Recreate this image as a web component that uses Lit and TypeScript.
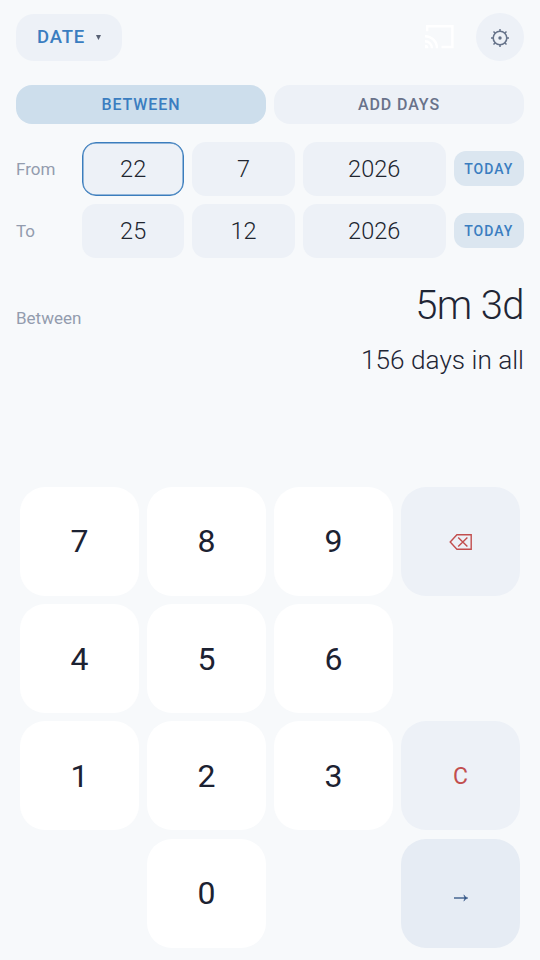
import { LitElement, html, css, TemplateResult } from "lit";
import { customElement, property, state } from "lit/decorators.js";
import { classMap } from "lit/directives/class-map.js";

type Key = { id: string; kind: "digit" | "soft" | "next"; face: string | TemplateResult } | null;

const backspace = html`<svg class="icon" width="24" height="18" viewBox="0 0 24 18" fill="none" stroke="currentColor" stroke-width="1.4">
  <path d="M1.2 9 L7.9 1.7 H22.2 V16.3 H7.9 Z" />
  <path d="M9.2 4.4 L18.4 13.6 M18.4 4.4 L9.2 13.6" />
</svg>`;

const arrow = html`<svg class="icon" width="16" height="10" viewBox="0 0 16 10" fill="none" stroke="currentColor">
  <path d="M1 5 H13" stroke-width="1.3" />
  <path d="M10.8 1.8 Q12 4.2 15 5 Q12 5.8 10.8 8.2 L11.8 5 Z" fill="currentColor" stroke-width="0.4" />
</svg>`;

const cast = html`<svg class="cast" width="34" height="28" viewBox="0 0 34 28" fill="none" stroke="currentColor" stroke-width="2.4">
  <path d="M5.2 8.2 V3.2 H30.4 V24 H19.5" />
  <path d="M3 13.2 A12 12 0 0 1 15 25.2 M3 18.2 A7 7 0 0 1 10 25.2" />
  <path d="M3 21.8 A3.4 3.4 0 0 1 6.4 25.2 H3 Z" fill="currentColor" stroke="none" />
</svg>`;

const gear = html`<svg class="icon" width="20" height="20" viewBox="-10 -10 20 20" fill="none" stroke="currentColor">
  <circle r="6.8" stroke-width="1.6" />
  <circle r="1.7" fill="currentColor" stroke="none" />
  <path stroke-width="1.5" d="M0 -6.4V-9M0 6.4V9M-6.4 0H-9M6.4 0H9M-4.5 -4.5L-6.5 -6.5M4.5 -4.5L6.5 -6.5M-4.5 4.5L-6.5 6.5M4.5 4.5L6.5 6.5" />
</svg>`;

const keys: Key[] = [
  ...["7", "8", "9"].map((d) => ({ id: d, kind: "digit" as const, face: d })),
  { id: "backspace", kind: "soft", face: backspace },
  ...["4", "5", "6"].map((d) => ({ id: d, kind: "digit" as const, face: d })),
  null,
  ...["1", "2", "3"].map((d) => ({ id: d, kind: "digit" as const, face: d })),
  { id: "clear", kind: "soft", face: "C" },
  null,
  { id: "0", kind: "digit", face: "0" },
  null,
  { id: "next", kind: "next", face: arrow },
];

const resets = css`
  * { box-sizing: border-box; }
  button {
    border: 0;
    margin: 0;
    padding: 0;
    font: inherit;
    color: inherit;
    background: none;
    display: flex;
    align-items: center;
    justify-content: center;
  }
  svg { display: block; }
`;

@customElement("date-row")
export class DateRow extends LitElement {
  @property() label = "";
  @property({ type: Array }) parts: string[] = [];
  @property({ type: Number }) active = -1;

  static styles = [
    resets,
    css`
      :host {
        display: grid;
        grid-template-columns: 58px 102.5px 102.5px 143px 70.5px;
        column-gap: 7.9px;
        align-items: center;
        height: 54px;
      }
      .label { font-size: 17px; color: #939cae; }
      .field {
        height: 54px;
        border-radius: 14px;
        background: #edf1f7;
        color: #20252f;
        font-size: 23.5px;
        font-weight: 300;
      }
      .active { border: 1.5px solid #3b7dbd; box-shadow: inset 0 0 0 0.5px #3b7dbd; }
      .today {
        height: 35px;
        border-radius: 12px;
        background: #dbe6f0;
        color: #3a7dc0;
        font-size: 14px;
        font-weight: 500;
        letter-spacing: 1.05px;
      }
    `,
  ];

  render() {
    return html`
      <span class="label">${this.label}</span>
      ${this.parts.map((p, i) => html`<button class=${classMap({ field: true, active: i === this.active })}>${p}</button>`)}
      <button class="today">TODAY</button>
    `;
  }
}

@customElement("key-pad")
export class KeyPad extends LitElement {
  static styles = [
    resets,
    css`
      :host {
        display: grid;
        grid-template-columns: repeat(4, 1fr);
        grid-auto-rows: 109px;
        gap: 8.2px 8px;
      }
      .key { border-radius: 25px; font-size: 32px; }
      .digit { background: #fff; color: #1c2232; }
      .soft { background: #edf1f7; color: #c24e4e; font-size: 23px; padding-top: 1px; }
      .next { background: #e6ecf4; color: #2f5283; padding-top: 10px; }
    `,
  ];

  render() {
    return keys.map((k) =>
      k ? html`<button class="key ${k.kind}" aria-label=${k.id}>${k.face}</button>` : html`<span></span>`
    );
  }
}

@customElement("app-root")
export class AppRoot extends LitElement {
  @state() private mode = "BETWEEN";

  static styles = [
    resets,
    css`
      :host {
        display: flex;
        flex-direction: column;
        box-sizing: border-box;
        width: 100%;
        height: 960px;
        overflow: hidden;
        padding: 13px 16px 12.5px;
        background: #f7f9fb;
        font-family: Roboto, "Liberation Sans", sans-serif;
      }
      header { display: flex; align-items: center; height: 48px; }
      .menu {
        width: 106px;
        height: 47px;
        border-radius: 18px;
        background: #edf1f7;
        color: #3a7dc0;
        font-size: 18.5px;
        font-weight: 500;
        letter-spacing: 0.8px;
        gap: 11px;
      }
      .caret { width: 5px; height: 5px; margin-top: 1px; background: #586174; clip-path: polygon(0 0, 100% 0, 50% 100%); }
      .cast { margin-left: auto; margin-right: 20px; color: #fff; }
      .settings { width: 48px; height: 48px; border-radius: 50%; background: #edf1f7; color: #66738a; padding-top: 1px; }
      .tabs { display: grid; grid-template-columns: 1fr 1fr; gap: 8px; margin-top: 23.5px; }
      .tab {
        height: 39.5px;
        border-radius: 16px;
        background: #edf1f7;
        color: #69728a;
        font-size: 16px;
        font-weight: 500;
        letter-spacing: 0.9px;
      }
      .selected { background: #cddeec; color: #3a7dc0; }
      .dates { display: grid; gap: 8px; margin-top: 17.5px; }
      .result { display: flex; justify-content: space-between; align-items: flex-start; margin-top: 24px; }
      .caption { font-size: 17px; line-height: 20px; color: #939cae; margin-top: 26.5px; }
      .values { display: grid; justify-items: end; color: #1f2635; font-weight: 300; }
      .main { font-size: 40px; line-height: 48px; letter-spacing: -0.6px; }
      .total { font-size: 26.2px; line-height: 32px; margin-top: 14px; }
      key-pad { margin: auto 4px 0; }
    `,
  ];

  render() {
    return html`
      <header>
        <button class="menu"><span>DATE</span><span class="caret"></span></button>
        ${cast}
        <button class="settings" aria-label="Settings">${gear}</button>
      </header>
      <nav class="tabs">
        ${["BETWEEN", "ADD DAYS"].map(
          (t) => html`<button class=${classMap({ tab: true, selected: t === this.mode })} @click=${() => (this.mode = t)}>${t}</button>`
        )}
      </nav>
      <section class="dates">
        <date-row label="From" .parts=${["22", "7", "2026"]} .active=${0}></date-row>
        <date-row label="To" .parts=${["25", "12", "2026"]}></date-row>
      </section>
      <section class="result">
        <span class="caption">Between</span>
        <div class="values">
          <span class="main">5m 3d</span>
          <span class="total">156 days in all</span>
        </div>
      </section>
      <key-pad></key-pad>
    `;
  }
}
